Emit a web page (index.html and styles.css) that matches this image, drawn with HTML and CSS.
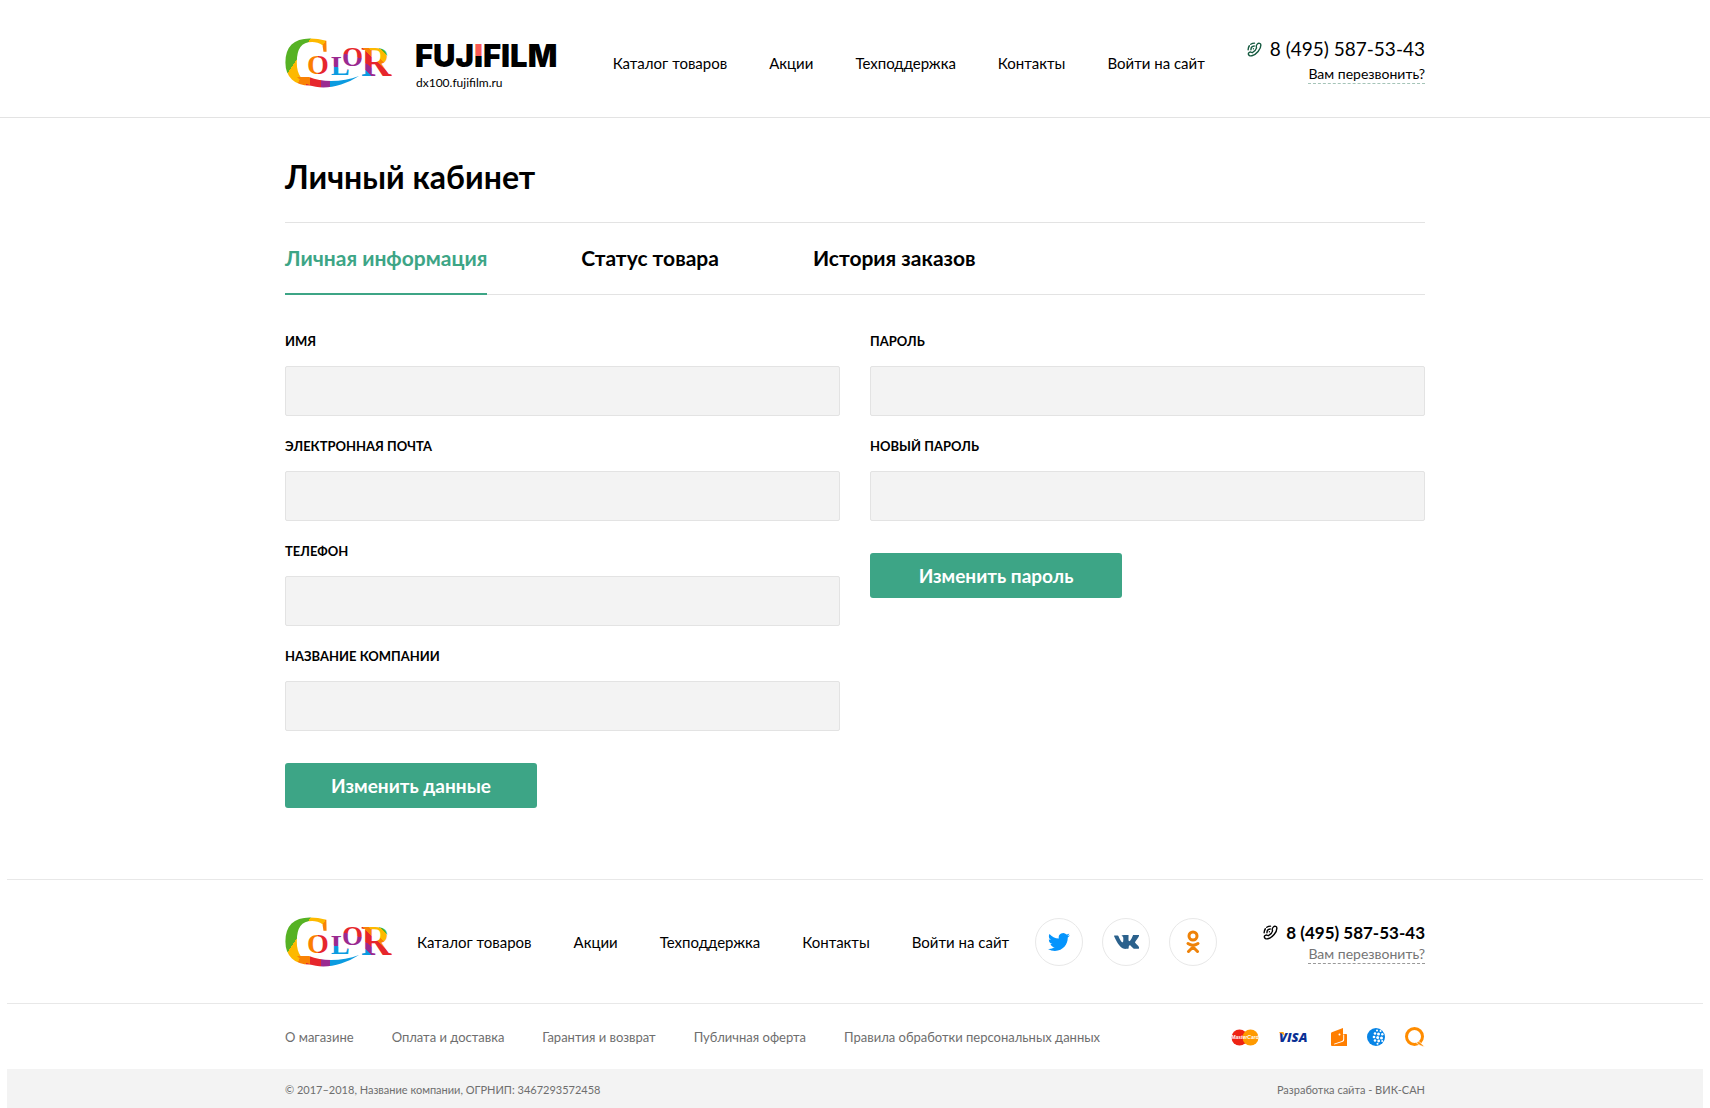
FILE: index.html
```html
<!DOCTYPE html>
<html lang="ru">
<head>
    <meta charset="UTF-8">
    <meta name="viewport" content="width=device-width, initial-scale=1.0">
    <title>Личный кабинет</title>
    <link rel="stylesheet" href="styles.css">
</head>
<body>
    <!-- shared gradients and the phone icon -->
    <svg class="sprite" aria-hidden="true">
        <defs>
            <linearGradient id="bigC" gradientUnits="userSpaceOnUse" x1="2" y1="14" x2="50" y2="46">
                <stop offset="0.22" stop-color="#56b224"/>
                <stop offset="0.22" stop-color="#fdb900"/>
                <stop offset="0.46" stop-color="#fdb900"/>
                <stop offset="0.46" stop-color="#f98205"/>
                <stop offset="0.6" stop-color="#f98205"/>
                <stop offset="0.6" stop-color="#e6262c"/>
            </linearGradient>
            <linearGradient id="swoosh" gradientUnits="userSpaceOnUse" x1="14" y1="0" x2="74" y2="0">
                <stop offset="0.18" stop-color="#f98205"/>
                <stop offset="0.18" stop-color="#e6262c"/>
                <stop offset="0.36" stop-color="#e6262c"/>
                <stop offset="0.36" stop-color="#9a2a90"/>
                <stop offset="0.52" stop-color="#9a2a90"/>
                <stop offset="0.52" stop-color="#0b9be0"/>
            </linearGradient>
            <linearGradient id="smallO" x1="0" y1="0" x2="1" y2="0">
                <stop offset="0.5" stop-color="#fb7f00"/>
                <stop offset="0.5" stop-color="#e6262c"/>
            </linearGradient>
            <linearGradient id="bands" gradientUnits="userSpaceOnUse" x1="70" y1="10" x2="62" y2="40">
                <stop offset="0.3" stop-color="#e6262c"/>
                <stop offset="0.3" stop-color="#9a2a90"/>
                <stop offset="0.78" stop-color="#9a2a90"/>
                <stop offset="0.78" stop-color="#0b9be0"/>
            </linearGradient>
            <linearGradient id="bigR" gradientUnits="userSpaceOnUse" x1="104" y1="12" x2="78" y2="40">
                <stop offset="0.16" stop-color="#56b224"/>
                <stop offset="0.16" stop-color="#fdb900"/>
                <stop offset="0.34" stop-color="#fdb900"/>
                <stop offset="0.34" stop-color="#f98205"/>
                <stop offset="0.46" stop-color="#f98205"/>
                <stop offset="0.46" stop-color="#e6262c"/>
                <stop offset="0.68" stop-color="#e6262c"/>
                <stop offset="0.68" stop-color="#9a2a90"/>
                <stop offset="0.82" stop-color="#9a2a90"/>
                <stop offset="0.82" stop-color="#0b9be0"/>
            </linearGradient>
        </defs>
        <symbol id="phone" viewBox="0 0 16 16">
            <g fill="none" stroke="currentColor" stroke-width="1.5" stroke-linecap="round" stroke-linejoin="round">
                <path d="M11.200 2c1.200-1.200 3.500-.6 3.600 1.200.1 4.300-4.800 10.300-9.600 11.500-2 .5-3.700-.5-3.800-2-.1-1.500 2-2.400 3.300-1.700l1 .4c1.700-.8 3.900-3.200 4.500-5.100l-.3-1.100c-.3-1.100.4-2.300 1.300-3.200z"/>
                <path d="M1.200 8.200C1.200 6.500 1.700 5.200 2.500 4M4 2.400C5.200 1.600 6.500 1.200 8 1.200"/>
                <path d="M4.200 8.200C4.200 6.200 5.600 4.500 7.700 4.300M6.800 7.200v0"/>
            </g>
        </symbol>
    </svg>

    <header class="header">
        <div class="container header-row">
            <div class="brand">
                <a href="#">
                    <svg class="logo" viewBox="0 0 106 52" aria-label="Color">
                        <text x="-3" y="48" font-size="70" fill="url(#bigC)">C</text>
                        <path d="M16 22C16 36 24 43 38 44H56V18H26z" fill="#fff"/>
                        <path d="M12 40C26 55 52 53 74 39C58 45 38 46 24 40z" fill="url(#swoosh)"/>
                        <text x="22" y="37" font-size="28" fill="url(#smallO)">O</text>
                        <text x="46" y="38" font-size="28" fill="url(#bands)">L</text>
                        <text x="57" y="29" font-size="27" fill="url(#bands)">O</text>
                        <text x="76" y="39" font-size="42" fill="url(#bigR)">R</text>
                    </svg>
                </a>
                <a href="#" class="fuji">
                    <svg class="fuji-logo" viewBox="0 0 142 24" aria-label="Fujifilm">
                        <defs>
                            <linearGradient id="fujiI" gradientUnits="userSpaceOnUse" x1="0" y1="1" x2="0" y2="23">
                                <stop offset="0.5" stop-color="#f95a55"/>
                                <stop offset="0.5" stop-color="#000"/>
                            </linearGradient>
                        </defs>
                        <text x="-1" y="23">FUJ<tspan fill="url(#fujiI)">I</tspan>FILM</text>
                    </svg>
                    <span>dx100.fujifilm.ru</span>
                </a>
            </div>
            <nav class="nav">
                <a href="#">Каталог товаров</a>
                <a href="#">Акции</a>
                <a href="#">Техподдержка</a>
                <a href="#">Контакты</a>
                <a href="#">Войти на сайт</a>
            </nav>
            <div class="phone">
                <a class="phone-number" href="tel:84955875343"><svg class="phone-icon"><use href="#phone"/></svg>8 (495) 587-53-43</a>
                <a class="callback" href="#">Вам перезвонить?</a>
            </div>
        </div>
    </header>

    <main class="container">
        <h1>Личный кабинет</h1>
        <div class="tabs">
            <a href="#" class="tab active">Личная информация</a>
            <a href="#" class="tab">Статус товара</a>
            <a href="#" class="tab">История заказов</a>
        </div>
        <div class="forms">
            <form class="form">
                <label for="name">Имя</label>
                <input type="text" id="name">
                <label for="email">Электронная почта</label>
                <input type="email" id="email">
                <label for="tel">Телефон</label>
                <input type="tel" id="tel">
                <label for="company">Название компании</label>
                <input type="text" id="company">
                <button type="button" class="btn">Изменить данные</button>
            </form>
            <form class="form">
                <label for="password">Пароль</label>
                <input type="password" id="password">
                <label for="newPassword">Новый пароль</label>
                <input type="password" id="newPassword">
                <button type="button" class="btn">Изменить пароль</button>
            </form>
        </div>
    </main>

    <footer class="footer">
        <div class="footer-top">
            <div class="container footer-row">
                <a href="#">
                    <svg class="logo" viewBox="0 0 106 52" aria-label="Color">
                        <text x="-3" y="48" font-size="70" fill="url(#bigC)">C</text>
                        <path d="M16 22C16 36 24 43 38 44H56V18H26z" fill="#fff"/>
                        <path d="M12 40C26 55 52 53 74 39C58 45 38 46 24 40z" fill="url(#swoosh)"/>
                        <text x="22" y="37" font-size="28" fill="url(#smallO)">O</text>
                        <text x="46" y="38" font-size="28" fill="url(#bands)">L</text>
                        <text x="57" y="29" font-size="27" fill="url(#bands)">O</text>
                        <text x="76" y="39" font-size="42" fill="url(#bigR)">R</text>
                    </svg>
                </a>
                <nav class="nav">
                    <a href="#">Каталог товаров</a>
                    <a href="#">Акции</a>
                    <a href="#">Техподдержка</a>
                    <a href="#">Контакты</a>
                    <a href="#">Войти на сайт</a>
                </nav>
                <div class="social">
                    <a href="#" aria-label="Twitter">
                        <svg width="22" height="22" viewBox="0 0 24 24" fill="#0594fc"><path d="M23.950 4.570a10 10 0 0 1-2.820.770 4.960 4.960 0 0 0 2.160-2.720 9.900 9.900 0 0 1-3.120 1.180 4.920 4.920 0 0 0-8.380 4.480C7.690 8.090 4.070 6.130 1.640 3.160a4.820 4.820 0 0 0-.67 2.480c0 1.710.87 3.210 2.190 4.100a4.900 4.900 0 0 1-2.230-.62v.06a4.920 4.920 0 0 0 3.950 4.830 5 5 0 0 1-2.210.08 4.940 4.940 0 0 0 4.600 3.420A9.870 9.870 0 0 1 0 19.540a14 14 0 0 0 7.550 2.210c9.050 0 14-7.500 14-13.980 0-.21 0-.42-.02-.63a9.940 9.940 0 0 0 2.420-2.570z"/></svg>
                    </a>
                    <a href="#" aria-label="ВКонтакте">
                        <svg width="25" height="14" viewBox="0 0 25 14" fill="#2b618c"><path d="M12.200 13.800h1.600s.5-.1.700-.4c.2-.2.200-.7.200-.7s0-2.100.9-2.400c1-.3 2.200 2 3.500 2.900 1 .7 1.700.5 1.700.5l3.400 0s1.800-.1.900-1.500c-.1-.1-.5-1.100-2.600-3-2.200-2.100-1.900-1.700.7-5.300 1.600-2.100 2.200-3.400 2-4C25-.6 23.800-.4 23.800-.4h-3.900s-.3 0-.5.100c-.2.200-.3.400-.3.400s-.6 1.700-1.400 3.100c-1.700 3-2.400 3.100-2.700 2.900-.7-.4-.5-1.800-.5-2.700 0-3 .4-4.200-.9-4.500C13.200 0 12.800 0 11.700 0c-1.500 0-2.700 0-3.400.3-.5.200-.8.700-.6.800.3 0 .9.200 1.200.6.400.6.400 1.800.4 1.800s.2 3.400-.6 3.800c-.5.300-1.200-.3-2.800-3C5.200 2.900 4.500 1.300 4.500 1.300S4.400.9 4.100.8C3.800.5 3.400.4 3.400.4H.8S.2.400.1.700c-.2.200 0 .6 0 .6s2.900 6.800 6.200 10.200c3 3.100 5.900 2.300 5.900 2.300z"/></svg>
                    </a>
                    <a href="#" aria-label="Одноклассники">
                        <svg width="14" height="24" viewBox="0 0 14 24" fill="none" stroke="#ee8208" stroke-width="3" stroke-linecap="round" stroke-linejoin="round"><circle cx="7" cy="6" r="4"/><path d="M2 13.500c3 2 7 2 10 0M7 15.500v1.500M2.500 21.500L7 17l4.500 4.500"/></svg>
                    </a>
                </div>
                <div class="phone phone-small">
                    <a class="phone-number" href="tel:84955875343"><svg class="phone-icon"><use href="#phone"/></svg>8 (495) 587-53-43</a>
                    <a class="callback" href="#">Вам перезвонить?</a>
                </div>
            </div>
        </div>
        <div class="container footer-links">
            <nav class="links">
                <a href="#">О магазине</a>
                <a href="#">Оплата и доставка</a>
                <a href="#">Гарантия и возврат</a>
                <a href="#">Публичная оферта</a>
                <a href="#">Правила обработки персональных данных</a>
            </nav>
            <div class="payments">
                <svg width="28" height="17" viewBox="0 0 28 17" aria-label="MasterCard">
                    <circle cx="8.500" cy="8.500" r="8" fill="#ee2314"/>
                    <circle cx="19.500" cy="8.500" r="8" fill="#ff9a00"/>
                    <text class="mc-text" x="14" y="10">MasterCard</text>
                </svg>
                <svg width="32" height="18" viewBox="0 0 32 18" aria-label="Visa">
                    <text class="visa-text" x="0" y="14">VISA</text>
                    <path d="M0 4h4.500L6 9C4.500 6.500 2.500 5 0 4.500z" fill="#f9a51a"/>
                </svg>
                <svg width="16" height="18" viewBox="0 0 16 18" aria-label="Яндекс.Деньги">
                    <path d="M0 5.500Q0 4.700.8 4.300L12 0v6h3.200q.8 0 .8.800V18H1q-1 0-1-1z" fill="#ff7e00"/>
                    <path d="M3 15.800L11 13q1.200-.5 1.200-1.700V6.500h1v5.300q0 1.500-1.400 2L3.300 16.600z" fill="#fff"/>
                    <circle cx="8.500" cy="6.500" r="1" fill="#fff"/>
                </svg>
                <svg width="18" height="18" viewBox="0 0 18 18" aria-label="WebMoney">
                    <circle cx="9" cy="9" r="9" fill="#0784e6"/>
                    <g fill="#fff">
                        <circle cx="10" cy="2.500" r="1"/><circle cx="13.500" cy="3" r="1"/>
                        <circle cx="8" cy="5.500" r="1.300"/><circle cx="11.500" cy="6" r="1.500"/><circle cx="15.300" cy="6.300" r="1.200"/>
                        <circle cx="7" cy="9" r="1.300"/><circle cx="10.700" cy="9.500" r="1.500"/><circle cx="14.500" cy="9.900" r="1.500"/>
                        <circle cx="8" cy="12.500" r="1.300"/><circle cx="11.700" cy="13" r="1.400"/><circle cx="15.200" cy="13" r="1"/>
                        <circle cx="10.500" cy="15.800" r="1"/>
                    </g>
                </svg>
                <svg width="20" height="20" viewBox="0 0 20 20" fill="none" aria-label="QIWI">
                    <circle cx="9.500" cy="9.500" r="8" stroke="#ff8c00" stroke-width="3"/>
                    <path d="M11 15.500l3-1 5.500 5c-3 0-5.500-1.500-8.500-4z" fill="#ff8c00" stroke="#fff" stroke-width=".7"/>
                </svg>
            </div>
        </div>
        <div class="copyright">
            <div class="container copyright-row">
                <span>© 2017–2018, Название компании, ОГРНИП: 3467293572458</span>
                <a href="#">Разработка сайта - ВИК-САН</a>
            </div>
        </div>
    </footer>
</body>
</html>
```
FILE: styles.css
```css
* {
    box-sizing: border-box;
}
body {
    margin: 0;
    font-family: Lato, "Open Sans", sans-serif;
    font-size: 15px;
    line-height: 20px;
    color: #000;
    background: #fff;
}
a {
    color: inherit;
    text-decoration: none;
}
svg {
    display: block;
}
.sprite {
    position: absolute;
    width: 0;
    height: 0;
}
.container {
    width: 100%;
    max-width: 1140px;
    margin: 0 auto;
}

/* header */
.header {
    border-bottom: 1px solid #e3e3e3;
}
.header-row {
    display: flex;
    align-items: center;
    gap: 42px;
    padding: 37px 0 25px;
}
.brand {
    display: flex;
    gap: 25px;
}
.logo {
    width: 106px;
    height: 52px;
    overflow: visible;
}
.logo text {
    font-family: "Liberation Serif", serif;
    font-weight: bold;
    stroke: #fff;
    stroke-width: 2px;
    paint-order: stroke;
}
.fuji {
    padding-top: 7px;
    font-size: 12px;
    line-height: 18px;
}
.fuji-logo {
    width: 142px;
    height: 24px;
    margin-bottom: 6px;
    overflow: visible;
    font-family: Inter, sans-serif;
    font-size: 31px;
    font-weight: 900;
}
.nav {
    display: flex;
    gap: 42px;
    white-space: nowrap;
}
.header .nav {
    margin-left: auto;
    padding-bottom: 4px;
}
.phone {
    display: flex;
    flex-direction: column;
    align-items: flex-end;
    gap: 4px;
    white-space: nowrap;
}
.header .phone {
    align-self: flex-start;
}
.phone-number {
    display: flex;
    align-items: center;
    gap: 8px;
    font-size: 19px;
    line-height: 24px;
}
.phone-icon {
    width: 15px;
    height: 15px;
    color: #14593f;
}
.callback {
    font-size: 14px;
    line-height: 18px;
    border-bottom: 1px dashed #a5c4b8;
}

/* account */
h1 {
    margin: 0;
    padding: 38px 0 24px;
    font-size: 32px;
    line-height: 42px;
    border-bottom: 1px solid #e3e3e3;
}
.tabs {
    display: flex;
    gap: 94px;
    border-bottom: 1px solid #e3e3e3;
}
.tab {
    padding: 21px 0;
    margin-bottom: -1px;
    font-size: 21px;
    line-height: 28px;
    font-weight: bold;
    border-bottom: 2px solid transparent;
}
.tab.active {
    color: #3da586;
    border-color: #3da586;
}
.forms {
    display: grid;
    grid-template-columns: 1fr 1fr;
    gap: 30px;
    padding: 36px 0 71px;
}
.form label {
    display: block;
    margin-bottom: 15px;
    font-size: 13px;
    line-height: 20px;
    font-weight: bold;
    text-transform: uppercase;
}
.form input {
    display: block;
    width: 100%;
    height: 50px;
    margin-bottom: 20px;
    padding: 0 16px;
    font: inherit;
    background: #f3f3f3;
    border: 1px solid #e3e3e3;
    border-radius: 2px;
}
.btn {
    min-width: 252px;
    height: 45px;
    margin-top: 12px;
    font-family: inherit;
    font-size: 19px;
    font-weight: bold;
    color: #fff;
    background: #3da586;
    border: none;
    border-radius: 3px;
    cursor: pointer;
}
.btn:hover {
    background: #33906f;
}

/* footer */
.footer {
    margin: 0 7px;
    border-top: 1px solid #e8e8e8;
}
.footer-top {
    border-bottom: 1px solid #e8e8e8;
}
.footer-row {
    display: flex;
    align-items: center;
    gap: 26px;
    padding: 36px 0 35px;
}
.social {
    display: flex;
    gap: 19px;
}
.social a {
    display: flex;
    align-items: center;
    justify-content: center;
    width: 48px;
    height: 48px;
    border: 1px solid #e8e8e8;
    border-radius: 50%;
}
.phone-small {
    gap: 0;
    margin-left: auto;
}
.phone-small .phone-number {
    font-size: 17px;
    font-weight: bold;
}
.phone-small .phone-icon {
    color: #000;
}
.phone-small .callback {
    color: #757575;
    border-color: #999;
}
.footer-links {
    display: flex;
    align-items: center;
    justify-content: space-between;
    padding: 23px 0 22px;
    font-size: 13px;
    color: #6e6e6e;
}
.links {
    display: flex;
    gap: 38px;
    white-space: nowrap;
}
.payments {
    display: flex;
    align-items: center;
    gap: 20px;
}
.mc-text {
    font: italic bold 5px "Liberation Sans", sans-serif;
    fill: #fff;
    text-anchor: middle;
}
.visa-text {
    font: italic 800 13px "Open Sans", sans-serif;
    fill: #0a2f94;
}
.copyright {
    font-size: 11px;
    color: #6e6e6e;
    background: #f3f3f3;
}
.copyright-row {
    display: flex;
    justify-content: space-between;
    padding: 11px 0 8px;
}
```
